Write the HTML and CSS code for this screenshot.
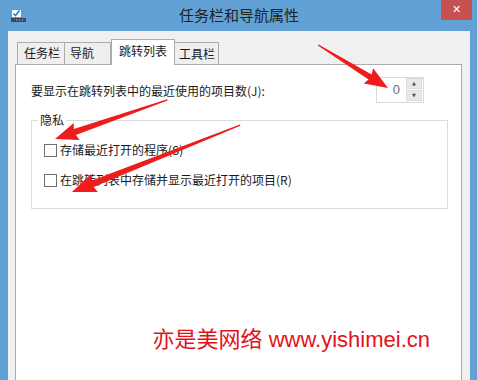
FILE: index.html
```html
<!DOCTYPE html>
<html lang="zh-CN">
<head>
    <meta charset="UTF-8">
    <meta name="viewport" content="width=device-width, initial-scale=1.0">
    <title>任务栏和导航属性</title>
    <link rel="stylesheet" href="styles.css">
</head>
<body>
    <div class="window">
        <div class="titlebar">
            <svg class="app-icon" width="16" height="16" viewBox="0 0 16 16">
                <rect x="1.5" y="1.5" width="10" height="8" fill="#fff" stroke="#7a8ea6"/>
                <path d="M3.5 5.5 L5.5 7.5 L9.5 2.5" fill="none" stroke="#2a7ad0" stroke-width="1.6"/>
                <rect x="1" y="10" width="15" height="4" fill="#3b4a63"/>
                <rect x="6" y="11.5" width="1" height="1" fill="#c9d4e2"/>
                <rect x="9" y="11.5" width="1" height="1" fill="#c9d4e2"/>
                <rect x="12" y="11.5" width="1" height="1" fill="#c9d4e2"/>
            </svg>
            <div class="title">任务栏和导航属性</div>
            <div class="close">✕</div>
        </div>

        <div class="client">
            <div class="tabs">
                <div class="tab tab-1">任务栏</div>
                <div class="tab tab-2">导航</div>
                <div class="tab tab-active">跳转列表</div>
                <div class="tab tab-4">工具栏</div>
            </div>

            <div class="panel">
                <div class="spin-row">
                    <span>要显示在跳转列表中的最近使用的项目数(J):</span>
                    <div class="spinbox">
                        <span class="spin-value">0</span>
                        <div class="spin-buttons">
                            <span class="spin-btn">▲</span>
                            <span class="spin-btn">▼</span>
                        </div>
                    </div>
                </div>

                <fieldset class="group">
                    <legend>隐私</legend>
                    <div class="check-row">
                        <span class="checkbox"></span>
                        <span>存储最近打开的程序(S)</span>
                    </div>
                    <div class="check-row">
                        <span class="checkbox"></span>
                        <span>在跳转列表中存储并显示最近打开的项目(R)</span>
                    </div>
                </fieldset>

                <div class="watermark">亦是美网络 www.yishimei.cn</div>
            </div>
        </div>

        <!-- annotation arrows drawn over the dialog -->
        <svg class="arrows" width="477" height="380" viewBox="0 0 477 380">
            <g fill="#ee1c1c">
                <g transform="translate(388 88) rotate(31.6)">
                    <polygon points="-82,-0.6 -21,-3 -23,-9 0,0 -23,9 -21,3 -82,0.6"/>
                </g>
                <g transform="translate(55 139) rotate(160.8)">
                    <polygon points="-119,-0.6 -21,-3.2 -23,-9 0,0 -23,9 -21,3.2 -119,0.6"/>
                </g>
                <g transform="translate(72 192) rotate(158.3)">
                    <polygon points="-181,-0.6 -22,-3.4 -24,-9.5 0,0 -24,9.5 -22,3.4 -181,0.6"/>
                </g>
            </g>
        </svg>
    </div>
</body>
</html>
```

FILE: styles.css
```css
* {
    box-sizing: border-box;
}

body {
    margin: 0;
    font-family: "Noto Sans CJK SC", "Liberation Sans", sans-serif;
    font-size: 12px;
    color: #1a1a1a;
    background: #61a1d6;
}

.window {
    position: relative;
    width: 477px;
    height: 380px;
    padding: 0 7px 0 8px;
    background-color: #61a1d6;
    display: flex;
    flex-direction: column;
    overflow: hidden;
}

.titlebar {
    height: 31px;
    display: grid;
    grid-template-columns: 1fr auto 1fr;
    align-items: center;
}

.app-icon {
    margin-left: 2px;
    margin-top: 1px;
}

.title {
    font-size: 15px;
    line-height: 20px;
    color: #222;
    margin-top: -1px;
}

.close {
    justify-self: end;
    align-self: start;
    margin-right: -2px;
    width: 31px;
    height: 20px;
    background-color: #c75050;
    color: #fff;
    font-family: "DejaVu Sans", sans-serif;
    font-size: 11px;
    font-weight: bold;
    line-height: 20px;
    text-align: center;
}

.client {
    flex: 1;
    background-color: #f0f0f0;
    padding: 9px 8px 0 7px;
    display: flex;
    flex-direction: column;
}

.tabs {
    display: flex;
    align-items: flex-end;
    height: 24px;
    padding-left: 2px;
}

.tab {
    height: 22px;
    border: 1px solid #acacac;
    border-bottom: none;
    background-color: #efefef;
    line-height: 20px;
    padding-left: 6px;
}

.tab-1 {
    width: 48px;
}

.tab-2 {
    width: 46px;
    border-left: none;
    padding-left: 5px;
}

.tab-active {
    position: relative;
    z-index: 1;
    width: 64px;
    height: 26px;
    margin-bottom: -1px;
    background-color: #fff;
    padding-left: 7px;
    line-height: 22px;
}

.tab-4 {
    width: 44px;
    border-left: none;
    padding-left: 4px;
    line-height: 22px;
}

.panel {
    flex: 1;
    background-color: #fff;
    border: 1px solid #acacac;
    border-bottom: none;
    padding: 12px 13px 0 15px;
}

.spin-row {
    display: flex;
    justify-content: space-between;
    align-items: center;
    padding-right: 24px;
    line-height: 16px;
}

.spin-row > span {
    margin-top: 1px;
}

.spinbox {
    width: 48px;
    height: 26px;
    border: 1px solid #d9d9d9;
    display: flex;
    align-items: stretch;
}

.spin-value {
    flex: 1;
    text-align: right;
    padding-right: 6px;
    line-height: 23px;
    font-family: "Liberation Sans", sans-serif;
    font-size: 13px;
    color: #6d6d6d;
}

.spin-buttons {
    width: 16px;
    margin: 0 1px 1px 0;
    display: flex;
    flex-direction: column;
    gap: 1px;
}

.spin-btn {
    flex: 1;
    background-color: #e8e8e8;
    border: 1px solid #dcdcdc;
    color: #555;
    font-family: "DejaVu Sans", sans-serif;
    font-size: 5px;
    line-height: 9px;
    text-align: center;
}

.group {
    margin: 9px 0 0 0;
    padding: 13px 0 19px 12px;
    border: 1px solid #dcdcdc;
    min-width: 0;
}

.group legend {
    margin-left: -6px;
    padding: 0 2px;
    line-height: 16px;
}

.check-row {
    display: flex;
    align-items: center;
    gap: 3px;
    height: 18px;
    line-height: 18px;
}

.check-row + .check-row {
    margin-top: 12px;
}

.checkbox {
    width: 13px;
    height: 13px;
    border: 1px solid #707070;
    background-color: #fff;
    margin-top: 1px;
}

.watermark {
    margin-top: 117px;
    margin-right: 18px;
    text-align: right;
    font-family: "Liberation Sans", "Noto Sans CJK SC", sans-serif;
    font-size: 22px;
    line-height: 28px;
    color: #e2111b;
}

.arrows {
    position: absolute;
    top: 0;
    left: 0;
    pointer-events: none;
}
```
